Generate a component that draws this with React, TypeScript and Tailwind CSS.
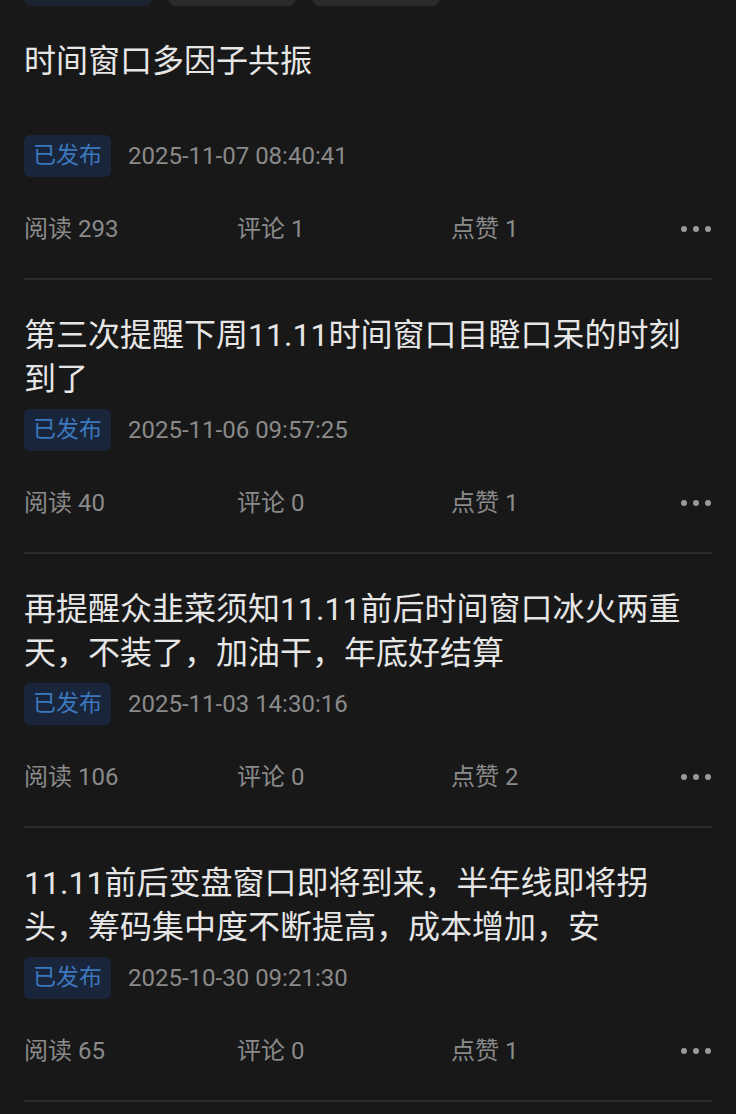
const posts = [
  { title: "时间窗口多因子共振", time: "2025-11-07 08:40:41", read: 293, comment: 1, like: 1 },
  { title: "第三次提醒下周11.11时间窗口目瞪口呆的时刻到了", time: "2025-11-06 09:57:25", read: 40, comment: 0, like: 1 },
  { title: "再提醒众韭菜须知11.11前后时间窗口冰火两重天，不装了，加油干，年底好结算", time: "2025-11-03 14:30:16", read: 106, comment: 0, like: 2 },
  { title: "11.11前后变盘窗口即将到来，半年线即将拐头，筹码集中度不断提高，成本增加，安", time: "2025-10-30 09:21:30", read: 65, comment: 0, like: 1 },
];

function PostItem({ post }: { post: (typeof posts)[number] }) {
  return (
    <div className="pt-[33px]">
      <div className="text-[32px] leading-[44px] text-[#e6e6e6] min-h-[88px] line-clamp-2">{post.title}</div>
      <div className="flex items-center mt-[8px]">
        <span className="h-[42px] px-[9px] flex items-center rounded-[6px] bg-[#19253a] text-[#3c78bd] text-[23px]">
          已发布
        </span>
        <span className="ml-[17px] text-[24px] text-[#8a8a8a]">{post.time}</span>
      </div>
      <div className="flex items-center h-[44px] mt-[30px] text-[24px] text-[#8a8a8a]">
        <span className="w-[213px]">阅读 {post.read}</span>
        <span className="w-[214px]">评论 {post.comment}</span>
        <span>点赞 {post.like}</span>
        {/* 更多 */}
        <span className="ml-auto flex gap-[6px] pr-[1px]">
          <i className="block w-[6px] h-[6px] rounded-full bg-[#9a9a9a]" />
          <i className="block w-[6px] h-[6px] rounded-full bg-[#9a9a9a]" />
          <i className="block w-[6px] h-[6px] rounded-full bg-[#9a9a9a]" />
        </span>
      </div>
      <div className="mt-[27px] h-[2px] bg-[#2c2c2c]" />
    </div>
  );
}

export default function App() {
  return (
    <div
      className="min-h-[1114px] bg-[#181818] px-[24px] overflow-hidden"
      style={{ fontFamily: 'Roboto, "Noto Sans CJK SC", sans-serif' }}
    >
      <div className="flex gap-[16px] -mt-[36px]">
        <div className="w-[128px] h-[42px] rounded-[8px] bg-[#1b2330]" />
        <div className="w-[128px] h-[42px] rounded-[8px] bg-[#2a2a2a]" />
        <div className="w-[128px] h-[42px] rounded-[8px] bg-[#2a2a2a]" />
      </div>
      {posts.map((p) => (
        <PostItem key={p.time} post={p} />
      ))}
    </div>
  );
}
